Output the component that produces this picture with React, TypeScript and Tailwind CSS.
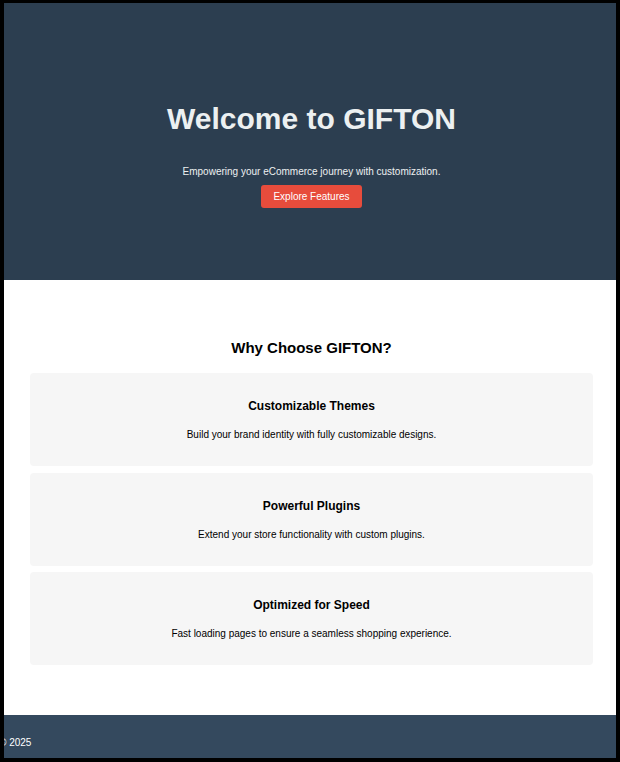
const features = [
  { title: "Customizable Themes", text: "Build your brand identity with fully customizable designs." },
  { title: "Powerful Plugins", text: "Extend your store functionality with custom plugins." },
  { title: "Optimized for Speed", text: "Fast loading pages to ensure a seamless shopping experience." },
];

const FeatureCard = ({ title, text }: { title: string; text: string }) => {
  return (
    <div className="h-[93px] rounded-[4px] bg-[#f6f6f6] flex flex-col items-center pt-[26px]">
      <h3 className="text-[12px] leading-[14px] font-bold text-black">{title}</h3>
      <p className="mt-[16px] text-[10px] leading-[12px] text-black">{text}</p>
    </div>
  );
};

export default function App() {
  return (
    <div
      className="w-[620px] h-[762px] bg-black pt-[3px] pl-[4px] pr-[4px] pb-[4px] flex flex-col"
      style={{ fontFamily: '"Liberation Sans", Arial, sans-serif' }}
    >
      <div className="flex-1 flex flex-col overflow-hidden">
        {/* HERO */}
        <section className="h-[277px] shrink-0 bg-[#2c3e50] pl-[3px] flex flex-col items-center pt-[99px]">
          <h1 className="text-[30px] leading-[34px] font-bold text-[#ecf0f1]">Welcome to GIFTON</h1>
          <p className="mt-[30px] text-[10px] leading-[12px] text-[#ecf0f1]">
            Empowering your eCommerce journey with customization.
          </p>
          <button
            type="button"
            className="mt-[7px] w-[101px] h-[23px] rounded-[3px] bg-[#e74c3c] text-white text-[10px] flex items-center justify-center"
          >
            Explore Features
          </button>
        </section>

        {/* FEATURES */}
        <main className="flex-1 bg-white pl-[26px] pr-[23px] pt-[59px]">
          <h2 className="text-center text-[15px] leading-[18px] font-bold text-black">Why Choose GIFTON?</h2>
          <div className="mt-[16px] flex flex-col gap-[6.5px]">
            {features.map((f) => (
              <FeatureCard key={f.title} title={f.title} text={f.text} />
            ))}
          </div>
        </main>

        {/* FOOTER */}
        <footer className="h-[43px] shrink-0 bg-[#34495e] pt-[22px]">
          <p className="ml-[-5px] text-[10px] leading-[12px] text-white whitespace-nowrap">© 2025</p>
        </footer>
      </div>
    </div>
  );
}
